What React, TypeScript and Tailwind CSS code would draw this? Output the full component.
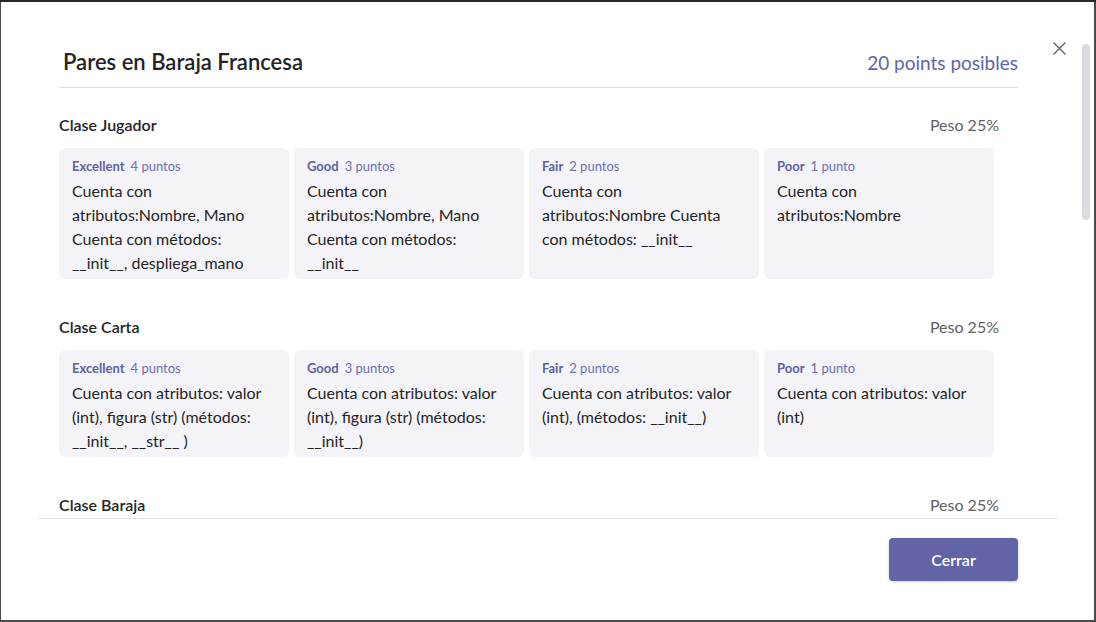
import React from 'react';

type Level = { label: string; points: string; text: string };
type Criterion = { title: string; weight: string; levels: Level[] };

// the third section only shows its heading above the fold
const criteria: Criterion[] = [
  {
    title: 'Clase Jugador',
    weight: 'Peso 25%',
    levels: [
      { label: 'Excellent', points: '4 puntos', text: 'Cuenta con atributos:Nombre, Mano Cuenta con métodos: __init__, despliega_mano' },
      { label: 'Good', points: '3 puntos', text: 'Cuenta con atributos:Nombre, Mano Cuenta con métodos: __init__' },
      { label: 'Fair', points: '2 puntos', text: 'Cuenta con atributos:Nombre Cuenta con métodos: __init__' },
      { label: 'Poor', points: '1 punto', text: 'Cuenta con atributos:Nombre' },
    ],
  },
  {
    title: 'Clase Carta',
    weight: 'Peso 25%',
    levels: [
      { label: 'Excellent', points: '4 puntos', text: 'Cuenta con atributos: valor (int), figura (str) (métodos: __init__, __str__ )' },
      { label: 'Good', points: '3 puntos', text: 'Cuenta con atributos: valor (int), figura (str) (métodos: __init__)' },
      { label: 'Fair', points: '2 puntos', text: 'Cuenta con atributos: valor (int), (métodos: __init__)' },
      { label: 'Poor', points: '1 punto', text: 'Cuenta con atributos: valor (int)' },
    ],
  },
  {
    title: 'Clase Baraja',
    weight: 'Peso 25%',
    levels: [],
  },
];

const LevelCard: React.FC<{ level: Level }> = ({ level }) => (
  <div className="bg-[#f4f4f8] rounded-[6px] px-[13px] pt-[9px] pb-[4px]">
    <div className="text-[13px] leading-[18px]">
      <span className="font-bold text-[#5f619f]">{level.label}</span>
      <span className="ml-[6px] text-[#6e70ad]">{level.points}</span>
    </div>
    <p className="mt-[4px] text-[16px] leading-[24px] text-[#242424]">{level.text}</p>
  </div>
);

export default function App() {
  return (
    <div
      className="w-[1096px] h-[622px] bg-[#4a4a4a] border-t-2 border-t-[#27262c] pl-px pr-[2px] pb-[2px] overflow-hidden"
      style={{ fontFamily: 'Lato, "Open Sans", sans-serif' }}
    >
      <div className="relative h-full bg-white flex flex-col">
        {/* close button */}
        <button className="absolute top-[37px] left-[1049px] w-[18px] h-[18px] flex items-center justify-center text-[#616161]">
          <svg width="13" height="13" viewBox="0 0 13 13" fill="none" stroke="currentColor" strokeWidth="1.3">
            <path d="M0.5 0.5L12.5 12.5M12.5 0.5L0.5 12.5" />
          </svg>
        </button>
        {/* outer scrollbar thumb */}
        <div className="absolute left-[1081px] top-[42px] w-[8px] h-[176px] rounded-full bg-[#dcdce0]" />

        <div className="ml-[58px] mr-[76px] pt-[45px] pb-[11px] border-b border-[#e0e0e0] flex items-baseline justify-between">
          <h1 className="pl-[4px] text-[22px] leading-[29px] font-semibold text-[#242424]">Pares en Baraja Francesa</h1>
          <span className="text-[19px] leading-[24px] text-[#6264a7]">20 points posibles</span>
        </div>

        <div className="relative ml-[38px] w-[1018px] flex-1 min-h-0 overflow-hidden">
          <div className="pl-[20px] pr-[58px] pt-[25px]">
            {criteria.map((c) => (
              <section key={c.title} className="mb-[36px]">
                <div className="flex items-center justify-between">
                  <h2 className="text-[16px] leading-[24px] font-semibold text-[#242424]">{c.title}</h2>
                  <span className="text-[16px] leading-[24px] text-[#616161]">{c.weight}</span>
                </div>
                {c.levels.length > 0 && (
                  <div className="mt-[11px] grid grid-cols-[repeat(4,230px)] gap-[5px]">
                    {c.levels.map((l) => (
                      <LevelCard key={l.label} level={l} />
                    ))}
                  </div>
                )}
              </section>
            ))}
          </div>
          {/* inner scrollbar thumb */}
          <div className="absolute left-[1024px] top-[12px] w-[8px] h-[188px] rounded-full bg-[#dcdce0]" />
        </div>

        <div className="ml-[38px] w-[1018px] border-t border-[#e0e0e0] pt-[19px] pb-[39px] pr-[39px] flex justify-end">
          <button className="w-[129px] h-[43px] rounded-[4px] bg-[#6264a7] text-white text-[16px] font-semibold shadow-[0_1px_3px_rgba(0,0,0,0.2)]">
            Cerrar
          </button>
        </div>
      </div>
    </div>
  );
}
